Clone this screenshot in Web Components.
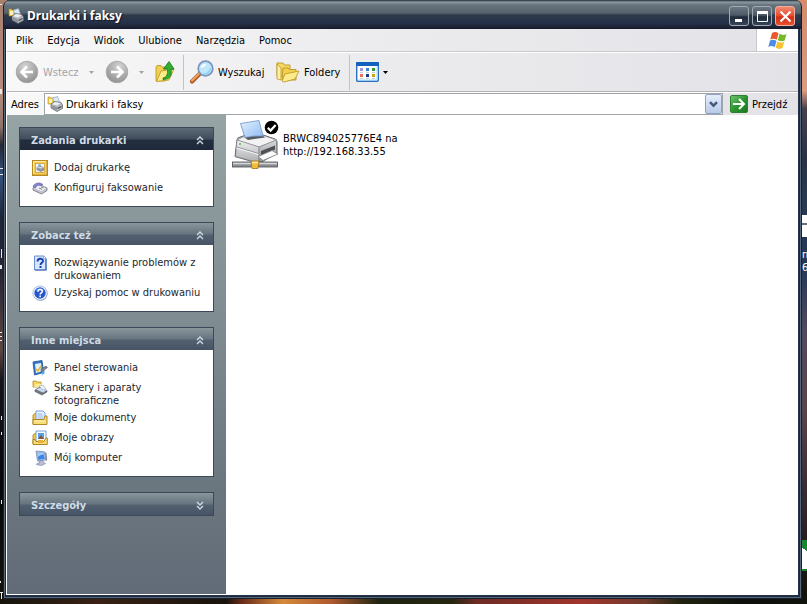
<!DOCTYPE html>
<html lang="pl">
<head>
<meta charset="utf-8">
<title>Drukarki i faksy</title>
<style>
  body { margin: 0; font: 11px/13px "DejaVu Sans Condensed", "Noto Sans", sans-serif; color: #000; }
</style>
</head>
<body>
<desk-top>
  <app-window>
    <title-bar slot="title" label="Drukarki i faksy"></title-bar>
    <menu-bar slot="bars"></menu-bar>
    <tool-bar slot="bars"></tool-bar>
    <address-bar slot="bars" value="Drukarki i faksy"></address-bar>
    <task-pane slot="side">
      <task-panel heading="Zadania drukarki" primary>
        <task-link icon="addprinter">Dodaj drukarkę</task-link>
        <task-link icon="fax">Konfiguruj faksowanie</task-link>
      </task-panel>
      <task-panel heading="Zobacz też">
        <task-link icon="question">Rozwiązywanie problemów z drukowaniem</task-link>
        <task-link icon="help">Uzyskaj pomoc w drukowaniu</task-link>
      </task-panel>
      <task-panel heading="Inne miejsca">
        <task-link icon="control">Panel sterowania</task-link>
        <task-link icon="scanner">Skanery i aparaty fotograficzne</task-link>
        <task-link icon="docs">Moje dokumenty</task-link>
        <task-link icon="pics">Moje obrazy</task-link>
        <task-link icon="computer">Mój komputer</task-link>
      </task-panel>
      <task-panel heading="Szczegóły" collapsed></task-panel>
    </task-pane>
    <file-item>BRWC894025776E4 na http://192.168.33.55</file-item>
  </app-window>
</desk-top>

<script>
const ICONS = {
  printers: ['0 0 16 16', `
    <path d="M1 1h2l1 1h3v6H1z" fill="#f4cf4a" stroke="#b98a1c" stroke-width=".6"/>
    <path d="M2 3h3v4H2z" fill="#fff3b0"/>
    <path d="M5.500 2l5-1.500 2 5.500-5 2z" fill="#d8e8fa" stroke="#8497b5" stroke-width=".6"/>
    <path d="M4 8l3.500-2.500 6.500 1L15.500 9v3.500L10 15.500l-6-3.500z" fill="#b4b8bd" stroke="#585c61" stroke-width=".7"/>
    <path d="M5 8.200l3-2.200 5.500 1-3.200 2.600z" fill="#eceef0"/>
    <path d="M4.500 9l5.500 2.500v3L4.500 12z" fill="#8e949a"/><path d="M10.500 12.500l4-2" stroke="#444" stroke-width="1.200"/>`],
  back: ['0 0 24 24', `
    <defs><radialGradient id="g" cx=".4" cy=".25" r=".8"><stop offset="0" stop-color="#d4d4d4"/><stop offset=".6" stop-color="#aaa"/><stop offset="1" stop-color="#8f8f8f"/></radialGradient></defs>
    <circle cx="12" cy="12" r="10.800" fill="url(#g)" stroke="#a5a5a5" stroke-width=".8"/>
    <path d="M18 12H7.500M12 6.500L6.500 12l5.500 5.500" fill="none" stroke="#fff" stroke-width="2.600"/>`],
  up: ['0 0 20 22', `
    <path d="M1 6l1-1.500h4l1 1.500h3v14H1z" fill="#f0cf52" stroke="#b28f1e" stroke-width=".8"/>
    <path d="M1.500 20.500L6 10l13-2-5 11z" fill="#fce98a" stroke="#c29c22" stroke-width=".9"/>
    <path d="M8 17c4-1 5-4 4.500-9H8.500l5.500-7.500L19 8l-3 .5c1 6-1 10-8 10z" fill="#2faf2d" stroke="#16741a" stroke-width=".8"/>`],
  search: ['0 0 24 24', `
    <path d="M2 21.500l8-8" stroke="#a85a28" stroke-width="4.200" stroke-linecap="round"/>
    <path d="M2 20.700l7.500-7.500" stroke="#f3a35c" stroke-width="2" stroke-linecap="round"/>
    <circle cx="15.500" cy="8.500" r="7.300" fill="#bfe6fb" stroke="#7b93bd" stroke-width="1.700"/>
    <path d="M10.500 8c.5-3 3-4.500 6-4.300-1 2.500-3 4-6 4.300z" fill="#fff" opacity=".85"/>
    <path d="M13 14c4 .5 7-2 7.500-6" stroke="#8fd0f2" stroke-width="1.500" fill="none"/>`],
  folders: ['0 0 24 22', `
    <path d="M1 2h6l1.500 2H14v11H1z" fill="#f5d862" stroke="#bb9425" stroke-width=".9"/>
    <path d="M1 18V3l4 4v12z" fill="#fdf0a2" stroke="#bb9425" stroke-width=".8"/>
    <path d="M7 7h5l1.500 1.500H20V19H6z" fill="#f3d14e" stroke="#bb9425" stroke-width=".9"/>
    <path d="M6 20l3-7 14-3-4 8-11 3z" fill="#fdeb8c" stroke="#c19b27" stroke-width=".9"/>`],
  views: ['0 0 23 20', `
    <rect x=".7" y=".7" width="21.600" height="18.600" rx="1" fill="#fff" stroke="#2a6fc0" stroke-width="1.400"/>
    <path d="M0 1q0-1 1-1h21q1 0 1 1v3H0z" fill="#1261be"/><path d="M2 18h19V5" fill="none" stroke="#a6dbf5"/>
    <g><path d="M4 6h3v3H4z" fill="#a793dc"/><path d="M10 6h3v3h-3z" fill="#3a82d8"/><path d="M16 6h3v3h-3z" fill="#2c9b35"/>
    <path d="M4 12h3v3H4z" fill="#ee7058"/><path d="M10 12h3v3h-3z" fill="#163b8c"/><path d="M16 12h3v3h-3z" fill="#c7a420"/></g>
    <path d="M4 10.500h3m3 0h3m3 0h3M4 16.500h3m3 0h3m3 0h3" stroke="#b9c3cf" stroke-width=".8"/>`],
  flag: ['0 0 20 19', `
    <path d="M4 2c2.500-1.500 4.500-1 6.500.2L8.800 8.800C6.800 7.500 4.800 7.300 2.300 8.500z" fill="#ec5a2b"/>
    <path d="M11.500 2.800c2.300 1.300 4.500 1.500 7 .2l-1.800 6.500c-2.400 1.200-4.600 1-6.900-.3z" fill="#76b82c"/>
    <path d="M2 9.600c2.500-1.200 4.500-1 6.500.3l-1.800 6.300c-2-1.300-4-1.500-6.400-.3z" fill="#4a8ee6"/>
    <path d="M9.400 10.500c2.200 1.300 4.500 1.400 6.900.2l-1.800 6.400c-2.400 1.200-4.600 1-6.900-.3z" fill="#f5c32e"/>`],
  go: ['0 0 18 18', `
    <defs><linearGradient id="g" x2="1" y2="1"><stop offset="0" stop-color="#79c773"/><stop offset=".5" stop-color="#2c9630"/><stop offset="1" stop-color="#16771d"/></linearGradient></defs>
    <rect x=".5" y=".5" width="17" height="17" rx="1.500" fill="url(#g)" stroke="#2b8330"/>
    <path d="M3 9h10.500M9 4l5 5-5 5" fill="none" stroke="#fff" stroke-width="2"/>`],
  addprinter: ['0 0 16 16', `
    <rect x=".7" y=".7" width="14.600" height="14.600" fill="#f5cd58" stroke="#b98a20" stroke-width="1.400"/>
    <path d="M1.500 14V1.500H14" fill="none" stroke="#fbe9a5"/>
    <rect x="3.500" y="3.500" width="9" height="9" fill="#f7f5ea" stroke="#cf9f32" stroke-width=".8"/>
    <path d="M4.500 7.500L7 6l4 .8 1 1.200v2.500L9 12l-4.500-2z" fill="#8e97a5"/><path d="M5 7.500L7.500 6.500l3.500.8-2 1.400z" fill="#d4d9e2"/><path d="M6 4.500l2.500-.3 1 2.600-2.500.4z" fill="#7ea3dc"/>`],
  fax: ['0 0 16 16', `
    <path d="M1 8l5-4 9 4v2.500L9.500 14 1 10z" fill="#c3c6cf" stroke="#6d717c" stroke-width=".8"/>
    <path d="M2 8l4-3.200 8 3.400L9.500 11z" fill="#eff0f5"/>
    <path d="M1 6.500C2 4 5 2.500 8 3l3 1.500-2 1C6 4.500 4 6 3.500 8z" fill="#8588d4" stroke="#5558a0" stroke-width=".6"/>
    <path d="M7 8l3 1.300M9 7l2.500 1" stroke="#70747f" stroke-width=".9"/>`],
  question: ['0 0 16 16', `
    <path d="M2.500 1h9.300L14 3.200V15H2.500z" fill="#d6e6fc" stroke="#6b8fd0" stroke-width="1"/>
    <path d="M11.500 1v2.500H14" fill="#fff" stroke="#6b8fd0" stroke-width=".7"/><path d="M14 4v11H3" fill="none" stroke="#3f66b4" stroke-width="1.200"/>
    <path d="M5.500 6.500c0-3.700 5.500-3.500 5.500-.6 0 2-2.500 1.900-2.500 4" fill="none" stroke="#173fb0" stroke-width="1.900"/><rect x="7.500" y="11" width="2" height="2" fill="#173fb0"/>`],
  help: ['0 0 16 16', `
    <circle cx="8.500" cy="8.700" r="7" fill="#8a919d"/><circle cx="8" cy="8" r="7.200" fill="#f4f8ff" stroke="#9bb2dc" stroke-width=".8"/>
    <circle cx="8" cy="8" r="5.700" fill="#2457cf"/><path d="M3.500 6a5 5 0 0 1 9 0q-4.500-2-9 0z" fill="#6f9cf0"/>
    <path d="M6 6.700c0-3 4.300-2.700 4.300-.4C10.300 8 8.200 7.800 8.200 9.500" fill="none" stroke="#fff" stroke-width="1.600"/><rect x="7.300" y="10.500" width="1.700" height="1.700" fill="#fff"/>`],
  control: ['0 0 16 16', `
    <path d="M1 2l9-1.500 1.500 12L2.500 15z" fill="#3776ca" stroke="#1c4d96" stroke-width=".8"/>
    <path d="M3 4l6-1 .8 8.500L4 13z" fill="#dff1fd"/><path d="M4 9l2 2 3-5" stroke="#e7b736" stroke-width="1.500" fill="none"/>
    <path d="M9 9l5-3 1.500 1.500L11 11l-2 2z" fill="#7c8795" stroke="#4d5766" stroke-width=".6"/><path d="M10 12l2.500-1.500v3L10 15z" fill="#4fa7ec"/>`],
  scanner: ['0 0 16 16', `
    <path d="M1 1h3l1 1h4v5H1z" fill="#f6d65c" stroke="#b98d22" stroke-width=".8"/><path d="M2 7l2-3h6L8 7z" fill="#fdee9d"/>
    <path d="M3 10l5-3 7 3.500v1.500l-5 3-7-3.500z" fill="#70767f" stroke="#4d535c" stroke-width=".6"/><path d="M4 9.500l5-2.500 6 3-4 2.500z" fill="#cdd9ef"/><path d="M7 6l4-1 3 4-3 1z" fill="#edf0f4" stroke="#8e96a3" stroke-width=".5"/>`],
  docs: ['0 0 16 16', `
    <path d="M1 5l2-1.500h2V14H1z" fill="#f3cc50" stroke="#a87a18" stroke-width=".8"/><path d="M4 1h7l2 2v9H4z" fill="#eef6ff" stroke="#6a96d4" stroke-width=".9"/>
    <path d="M5.500 4h5m-5 2h6m-6 2h6" stroke="#84aee2" stroke-width=".9"/>
    <path d="M13 6h2v8.500H1V9.500h11z" fill="#f9dd75" stroke="#a87a18" stroke-width=".9"/><path d="M2 11h11" stroke="#fff2b4"/>`],
  pics: ['0 0 16 16', `
    <path d="M1 5l2-1.500h2V14H1z" fill="#f3cc50" stroke="#a87a18" stroke-width=".8"/><path d="M4 1h10v11H4z" fill="#f7fbff" stroke="#6a96d4" stroke-width=".9"/>
    <path d="M6 3h6v6H6z" fill="#5a9fe0"/><path d="M6 9l3-4 3 4z" fill="#8a5a30"/>
    <path d="M14 8h1.300v6.500H1V9.500h2l1 2h8z" fill="#f9dd75" stroke="#a87a18" stroke-width=".9"/><path d="M6 10h5v3H6z" fill="#eab03a"/>`],
  computer: ['0 0 16 16', `
    <path d="M4 1l8.500.8L14 10l-8.500 1z" fill="#b8c9e4" stroke="#6c83ae" stroke-width=".7"/><path d="M5 2.200l6.500.6 1.200 6.200-6.500.8z" fill="#3d84e4"/>
    <path d="M5 2.200l6.500.6.3 1.800q-4 .2-6 2.400z" fill="#9fccf8"/><path d="M7 11l4-.5.5 2 2 1-4 2-5-.8.5-1.200 2.500-.5z" fill="#b9bfdb" stroke="#747d9f" stroke-width=".6"/>
    <path d="M13 2l1.500 1 .7 7-1.200 1z" fill="#76839b"/>`],
  netprinter: ['0 0 48 50', `
    <defs>
      <linearGradient id="l" x2="0" y2="1"><stop offset="0" stop-color="#f1f1f2"/><stop offset="1" stop-color="#a9abae"/></linearGradient>
      <linearGradient id="r" x2="0" y2="1"><stop offset="0" stop-color="#d9dadb"/><stop offset="1" stop-color="#8b8e92"/></linearGradient>
      <linearGradient id="p" x2="1" y2="1"><stop offset="0" stop-color="#e4f1ff"/><stop offset="1" stop-color="#8fbcf2"/></linearGradient>
    </defs>
    <path d="M5 20q0-2 2-2.500l7-2.500 17 0 12 4q2 1 2 3v11L27 43.500 3 36.500z" fill="#bfc0c3" stroke="#5b5e62"/>
    <path d="M5 20l10-5 16 .5L44.500 20 27 27z" fill="#f2f2f3" stroke="#86898d" stroke-width=".6"/>
    <path d="M5 20l22 7v16L3.500 36.500z" fill="url(#l)" stroke="#777a7e" stroke-width=".6"/>
    <path d="M27 27l17.500-7v13L27 43z" fill="url(#r)" stroke="#777a7e" stroke-width=".6"/>
    <path d="M12 17l18-2 3 2.500-17 2.500z" fill="#55595e"/>
    <path d="M13 17.500L8.500 3.500 27 .5 31 16q-9-.5-18 1.500z" fill="url(#p)" stroke="#6e90c0" stroke-width=".8"/>
    <path d="M4.500 27l22 6.500" stroke="#8b8e92" stroke-width=".9"/><path d="M4.500 28l22 6.500" stroke="#fff" stroke-width=".8"/>
    <path d="M29 31l14-5.500v4L29 35.500z" fill="#4c5055"/>
    <path d="M26 36.500l14-6 6 3.500-15 6.500z" fill="#fbfbfb" stroke="#797c80" stroke-width=".8"/>
    <circle cx="8" cy="24" r="1" fill="#56b84e"/>
    <rect x=".5" y="42" width="45" height="5" fill="#8c8f93" stroke="#484b4f" stroke-width=".8"/><path d="M1 43.500h44" stroke="#d6d8da" stroke-width="1.500"/>
    <path d="M19 41h8l-1 7.500h-6z" fill="#f3bc38" stroke="#a2741a" stroke-width=".8"/><path d="M20 42.500h6" stroke="#fde9a0" stroke-width="1.500"/>
    <circle cx="39.500" cy="7.500" r="6.800" fill="#000"/><path d="M35.800 7.700l2.800 2.900 5-5.600" fill="none" stroke="#fff" stroke-width="2.200"/>`],
  chevrons: ['0 0 8 9', `<path d="M1 4l3-3 3 3M1 8l3-3 3 3" fill="none" stroke="currentColor" stroke-width="1.400"/>`],
  minimize: ['0 0 17 17', `<path d="M4 11h7v3H4z" fill="#fff"/>`],
  maximize: ['0 0 17 17', `<path d="M3.500 4v9.500h10V4M3 4h11" fill="none" stroke="#fff"/><path d="M3 3h11v3H3z" fill="#fff"/>`],
  close: ['0 0 17 17', `<path d="M3.500 3.500l10 10m0-10l-10 10" stroke="#fff" stroke-width="2.200"/>`],
  select: ['0 0 9 7', `<path d="M1 1.200l3.500 3.500L8 1.200" fill="none" stroke="#46597a" stroke-width="2.400"/>`],
  caret: ['0 0 5 3', `<path d="M0 0h5L2.500 3z" fill="currentColor"/>`]
};

const define = (name, markup, setup) => {
  customElements.define(name, class extends HTMLElement {
    constructor() { super(); this.attachShadow({ mode: 'open' }); }
    connectedCallback() {
      const t = document.createElement('template');
      t.innerHTML = typeof markup === 'function' ? markup(this) : markup;
      this.shadowRoot.replaceChildren(t.content.cloneNode(true));
      if (setup) setup(this, this.shadowRoot);
    }
  });
};

const RESET = `button { font: inherit; color: inherit; margin: 0; padding: 0; border: 0; background: none; white-space: nowrap; }`;

define('app-icon', el => {
  const [box, art] = ICONS[el.getAttribute('name')];
  const [, , w, h] = box.split(' ');
  return `<style>:host { display: block; flex: none; width: ${w}px; height: ${h}px; } svg { display: block; width: 100%; height: 100%; }</style>
    <svg viewBox="${box}" aria-hidden="true">${art}</svg>`;
});

define('desk-top', `
  <style>
    :host {
      display: grid; box-sizing: border-box; min-height: 100vh; padding: 0 5px 5px 3px; position: relative; overflow: hidden;
      background:
        linear-gradient(90deg, #15140c, #3a2114 12%, #17130c 28%, #6b2b1a 30%, #d48a3a 35%, #b05a30 41%, #1d2410 47%, #26260f 56%, #6d2b24 59%, #a1352c 72%, #6f3a2c 80%, #22240f 84%, #0d100b 92%, #10120c) bottom / 100% 6px no-repeat,
        linear-gradient(#a97f70, #b88c7c 15%, #8e7468 21%, #262832 24%, #35517f 29%, #1d2536 36%, #272432 45%, #5d4640 58%, #161418 63%, #07070a 80%, #14150d) left / 50% 100% no-repeat,
        linear-gradient(#d58a6c, #dd9a80 15%, #45414c 18%, #2b3145 26%, #28384f 33%, #25365a 44%, #514a5c 55%, #5a444c 68%, #3a2c36 80%, #241c22 90%, #101008) right / 50% 100% no-repeat;
    }
    .side { position: absolute; right: 0; top: 210px; width: 5px; height: 66px; overflow: hidden; color: #fff; }
    .tile { height: 22px; margin-top: 5px; background: linear-gradient(#fff 8px, #68717f 8px 10px, #fff 10px); }
    .name { margin-top: 11px; line-height: 13px; }
    .sheet { position: absolute; right: 0; top: 540px; width: 5px; height: 31px; background: linear-gradient(35deg, #fff 70%, #18862a 70%); border-block: 2px solid #18862a; box-sizing: border-box; }
    svg { position: absolute; left: 0; top: 0; width: 3px; height: 604px; }
  </style>
  <svg viewBox="0 0 3 604" aria-hidden="true"><path d="M0 4h2v1H0zM0 89h2v5H0zM0 168h3v1H0zM0 174h3v1H0zM1 249h1v9H1zM0 265h2v4H0zM0 332h2v1H0zM0 336h2v1H0zM0 340h2v1H0zM1 416h1v4H1zM1 432h1v3H1zM1 500h1v4H1zM0 581h1v2H0zM0 592h3v1H0zM1 593h1v6H1z" fill="#e8e8e8"/></svg>
  <div class="side"><div class="tile"></div><div class="name">n<br>6</div></div>
  <div class="sheet"></div>
  <slot></slot>`);

define('app-window', `
  <style>
    :host { position: relative; display: grid; grid-template-rows: auto auto 1fr; border: 1px solid #17202c; border-top: 0; border-radius: 7px 7px 0 0; background: #25334a; padding: 0 3px 3px 2px; box-shadow: inset 0 0 0 1px #56687c, inset 0 0 0 2px #1e2a3c; overflow: hidden; }
    .title { margin: 0 -3px 0 -2px; }
    .bars { border-left: 1px solid #fff; background: linear-gradient(90deg, #f8f8f9, #ececee 45%, #e3e2e7); }
    .body { display: grid; grid-template-columns: 219px 1fr; border: 1px solid #fff; border-top: 0; border-right: 0; background: #fff; }
    main { padding: 5px 6px; }
  </style>
  <div class="title"><slot name="title"></slot></div>
  <div class="bars"><slot name="bars"></slot></div>
  <div class="body"><slot name="side"></slot><main><slot></slot></main></div>`);

define('title-bar', el => `
  <style>${RESET}
    :host { display: flex; align-items: center; gap: 3px; box-sizing: border-box; height: 29px; padding: 3px 6px 0 4px;
      background: linear-gradient(#1e2833 0, #8c9aa0 2px, #66737c 5px, #56636e 13px, #2d3a4a 15px, #26324a 22px, #20273c 26px, #151a29); }
    h1 { flex: 1; margin: 0; font: bold 12px/18px "Noto Sans", sans-serif; color: #fff; text-shadow: 1px 1px 1px #111827; }
    button { width: 20px; height: 20px; display: grid; place-items: center; border: 1px solid #a2aab2; border-radius: 3px; background: linear-gradient(#6c7883, #4c5966 45%, #202c3c 55%, #354357); }
    .close { border-color: #f0b0a0; background: linear-gradient(#f08a70, #e8482c 50%, #d32c13 55%, #e8502f); }
  </style>
  <app-icon name="printers"></app-icon><h1>${el.getAttribute('label')}</h1>
  <button aria-label="Minimalizuj"><app-icon name="minimize"></app-icon></button>
  <button aria-label="Maksymalizuj"><app-icon name="maximize"></app-icon></button>
  <button class="close" aria-label="Zamknij"><app-icon name="close"></app-icon></button>`);

define('menu-bar', `
  <style>${RESET}
    :host { display: flex; justify-content: space-between; height: 22px; border-bottom: 1px solid #c9c9cc; }
    nav { display: flex; gap: 14px; padding-left: 9px; }
    .flag { display: grid; place-items: center; width: 41px; background: #fff; border-left: 1px solid #c9c9cc; }
  </style>
  <nav><button>Plik</button><button>Edycja</button><button>Widok</button><button>Ulubione</button><button>Narzędzia</button><button>Pomoc</button></nav>
  <div class="flag"><app-icon name="flag"></app-icon></div>`);

define('tool-bar', `
  <style>${RESET}
    :host { display: grid; grid-template-columns: 84px 44px 22px 1px 80px 67px 1px 32px; column-gap: 6px; align-items: center; height: 40px; padding-left: 8px; border-top: 1px solid #fff; border-bottom: 1px solid #b4b4b8; box-sizing: border-box; }
    button { display: flex; align-items: center; gap: 4px; }
    button[disabled] { color: #a3a3a6; padding-right: 5px; }
    .end { margin-left: auto; }
    .wide { justify-content: space-between; }
    .flip { transform: scaleX(-1); }
    i { height: 35px; background: #c4c4c8; }
  </style>
  <button disabled><app-icon name="back"></app-icon>Wstecz<app-icon class="end" name="caret"></app-icon></button>
  <button disabled class="wide" aria-label="Dalej"><app-icon class="flip" name="back"></app-icon><app-icon name="caret"></app-icon></button>
  <button aria-label="W górę"><app-icon name="up"></app-icon></button><i></i>
  <button><app-icon name="search"></app-icon>Wyszukaj</button>
  <button><app-icon name="folders"></app-icon>Foldery</button><i></i>
  <button aria-label="Widoki"><app-icon name="views"></app-icon><app-icon name="caret"></app-icon></button>`);

define('address-bar', el => `
  <style>${RESET}
    :host { display: grid; grid-template-columns: 33px 1fr 75px; align-items: center; height: 23px; padding-left: 4px; border-top: 1px solid #fff; box-sizing: border-box; }
    .box { display: grid; grid-template-columns: 16px 1fr 17px; column-gap: 3px; align-items: center; height: 22px; padding: 0 0 0 2px; border: 1px solid #a0a3a8; box-sizing: border-box; background: #fff; }
    input { font: inherit; color: inherit; border: 0; padding: 0; margin: 0; min-width: 0; background: none; outline: 0; }
    .drop { display: grid; place-items: center; height: 20px; border: 1px solid #8fa4c4; border-radius: 2px; background: linear-gradient(#e4edfb, #b8cbe8); }
    .go { display: flex; align-items: center; gap: 4px; padding-left: 7px; }
  </style>
  <label for="a">Adres</label>
  <div class="box"><app-icon name="printers"></app-icon><input id="a" value="${el.getAttribute('value')}"><button class="drop" aria-label="Rozwiń"><app-icon name="select"></app-icon></button></div>
  <button class="go"><app-icon name="go"></app-icon>Przejdź</button>`);

define('task-pane', `
  <style>:host { display: flex; flex-direction: column; gap: 15px; padding: 12px; background: linear-gradient(#96a4a5, #808d92 40%, #6c7880 75%, #626b78); }</style>
  <slot></slot>`);

define('task-panel', el => `
  <style>${RESET}
    :host { display: block; border: 1px solid #3b4857; }
    button { display: flex; justify-content: space-between; align-items: center; width: 100%; height: 22px; padding: 2px 9px 0 11px; color: #cfdce6; background: linear-gradient(#89969c, #66747f 50%, #526070 55%, #475466); }
    :host([primary]) button { background: linear-gradient(#5d6a76, #3f4c5a 50%, #222e3f 55%, #1f2939); }
    h2 { margin: 0; font: inherit; font-weight: bold; }
    .body { display: grid; gap: 3px; padding: 10px 10px 9px 12px; background: #fff; }
    :host([collapsed]) .body { display: none; }
    :host([collapsed]) app-icon { transform: scaleY(-1); }
  </style>
  <button aria-expanded="${!el.hasAttribute('collapsed')}"><h2>${el.getAttribute('heading')}</h2><app-icon name="chevrons"></app-icon></button>
  <div class="body"><slot></slot></div>`,
  (el, root) => root.querySelector('button').addEventListener('click', e => {
    el.toggleAttribute('collapsed');
    e.currentTarget.setAttribute('aria-expanded', !el.hasAttribute('collapsed'));
  }));

define('task-link', el => `
  <style>
    :host { display: block; min-height: 17px; }
    a { display: grid; grid-template-columns: 16px 1fr; column-gap: 6px; color: #22282f; text-decoration: none; }
    span { padding-top: 1px; }
  </style>
  <a href="#"><app-icon name="${el.getAttribute('icon')}"></app-icon><span><slot></slot></span></a>`);

define('file-item', `
  <style>
    :host { display: grid; grid-template-columns: 48px 120px; column-gap: 3px; align-items: center; width: max-content; }
    p { margin: 0; padding-bottom: 1px; }
  </style>
  <app-icon name="netprinter"></app-icon><p><slot></slot></p>`);
</script>
</body>
</html>
